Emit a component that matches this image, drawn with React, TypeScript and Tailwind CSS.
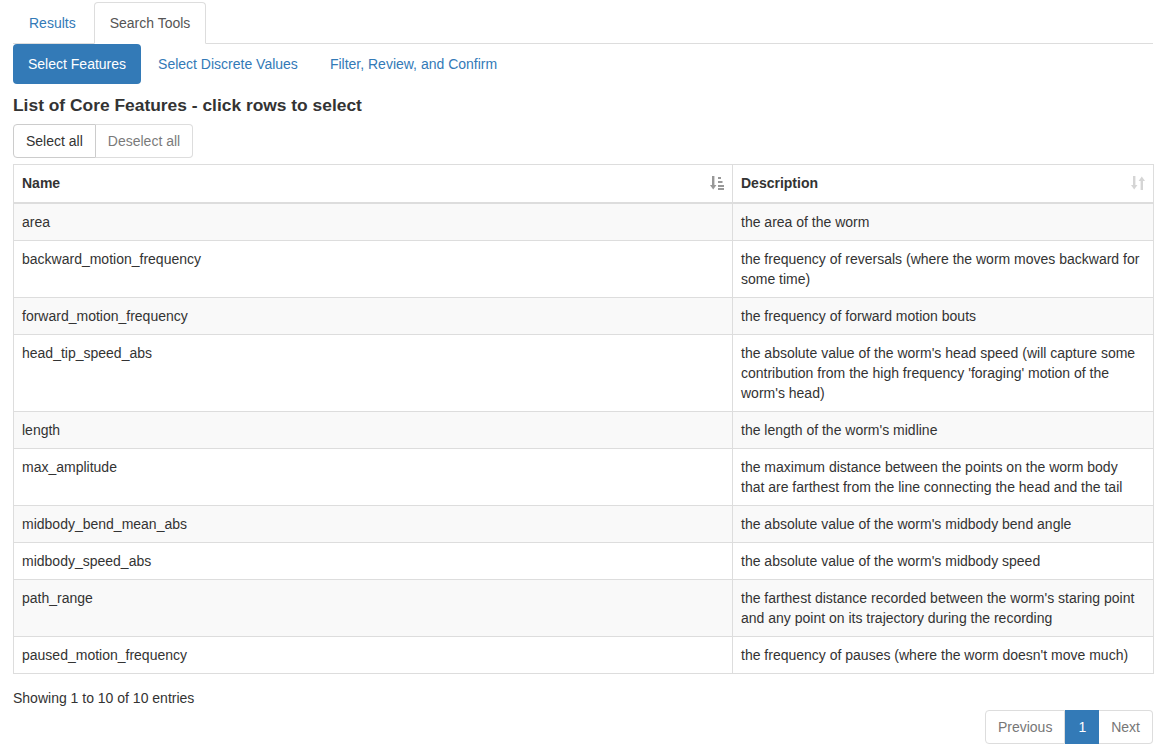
import React from "react";

const rows: [string, string][] = [
  ["area", "the area of the worm"],
  ["backward_motion_frequency", "the frequency of reversals (where the worm moves backward for some time)"],
  ["forward_motion_frequency", "the frequency of forward motion bouts"],
  ["head_tip_speed_abs", "the absolute value of the worm's head speed (will capture some contribution from the high frequency 'foraging' motion of the worm's head)"],
  ["length", "the length of the worm's midline"],
  ["max_amplitude", "the maximum distance between the points on the worm body that are farthest from the line connecting the head and the tail"],
  ["midbody_bend_mean_abs", "the absolute value of the worm's midbody bend angle"],
  ["midbody_speed_abs", "the absolute value of the worm's midbody speed"],
  ["path_range", "the farthest distance recorded between the worm's staring point and any point on its trajectory during the recording"],
  ["paused_motion_frequency", "the frequency of pauses (where the worm doesn't move much)"],
];

function SortAsc() {
  return (
    <svg width="14" height="14" viewBox="0 0 14 14" className="opacity-50">
      <rect x="2" y="0" width="2.4" height="10" fill="#333" />
      <path d="M0 9 L6.4 9 L3.2 13.5 Z" fill="#333" />
      <rect x="8" y="1" width="3" height="2" fill="#333" />
      <rect x="8" y="5" width="4.5" height="2" fill="#333" />
      <rect x="8" y="9" width="6" height="2" fill="#333" />
      <rect x="8" y="12" width="6" height="2" fill="#333" />
    </svg>
  );
}

function SortBoth() {
  return (
    <svg width="14" height="14" viewBox="0 0 14 14" className="opacity-20">
      <rect x="2" y="0" width="2.4" height="10" fill="#333" />
      <path d="M0 9 L6.4 9 L3.2 13.5 Z" fill="#333" />
      <rect x="9.6" y="4" width="2.4" height="10" fill="#333" />
      <path d="M7.6 5 L14 5 L10.8 0.5 Z" fill="#333" />
    </svg>
  );
}

export default function App() {
  return (
    <div
      className="min-h-[753px] bg-white text-[14px] leading-[20px] text-[#333]"
      style={{ fontFamily: '"Liberation Sans", Arial, Helvetica, sans-serif' }}
    >
      <div className="w-[1140px] ml-[13px]">
        {/* Tabs */}
        <div className="flex border-b border-[#ddd] pt-[2px]">
          <div className="px-[15px] py-[10px] text-[#337ab7] border border-transparent mb-[-1px] mr-[2px] rounded-t">
            Results
          </div>
          <div className="px-[15px] py-[10px] text-[#555] bg-white border border-[#ddd] border-b-white mb-[-1px] rounded-t">
            Search Tools
          </div>
        </div>

        {/* Pills */}
        <div className="flex gap-[2px]">
          <div className="px-[15px] py-[10px] bg-[#337ab7] text-white rounded">Select Features</div>
          <div className="px-[15px] py-[10px] text-[#337ab7]">Select Discrete Values</div>
          <div className="px-[15px] py-[10px] text-[#337ab7]">Filter, Review, and Confirm</div>
        </div>

        <h4 className="mt-[12px] mb-[8px] text-[17.4px] leading-[19.8px] font-bold text-[#333]">
          List of Core Features - click rows to select
        </h4>

        <div className="flex">
          <div className="px-[12px] py-[6px] border border-[#ccc] rounded-l text-[#333] bg-white">Select all</div>
          <div className="px-[12px] py-[6px] border border-[#ccc] border-l-0 rounded-r text-[#333] opacity-65 bg-white">
            Deselect all
          </div>
        </div>

        <table className="mt-[6px] w-[1140px] border-collapse border border-[#ddd] table-fixed">
          <colgroup>
            <col className="w-[719px]" />
            <col className="w-[421px]" />
          </colgroup>
          <thead>
            <tr>
              <th className="text-left font-bold pt-[8px] pb-[9px] px-[8px] border border-[#ddd] border-b-2">
                <div className="flex items-center justify-between">
                  <span>Name</span>
                  <SortAsc />
                </div>
              </th>
              <th className="text-left font-bold pt-[8px] pb-[9px] px-[8px] border border-[#ddd] border-b-2">
                <div className="flex items-center justify-between">
                  <span>Description</span>
                  <SortBoth />
                </div>
              </th>
            </tr>
          </thead>
          <tbody>
            {rows.map(([n, d], i) => (
              <tr key={n} className={i % 2 === 0 ? "bg-[#f9f9f9]" : "bg-white"}>
                <td className="align-top p-[8px] border border-[#ddd]">{n}</td>
                <td className="align-top py-[8px] pl-[8px] pr-[12px] border border-[#ddd]">{d}</td>
              </tr>
            ))}
          </tbody>
        </table>

        <div className="pt-[14px]">Showing 1 to 10 of 10 entries</div>

        <div className="flex justify-end mt-[2px]">
          <div className="flex">
            <div className="px-[12px] py-[6px] border border-[#ddd] rounded-l text-[#777] bg-white">Previous</div>
            <div className="px-[12px] py-[6px] border border-[#337ab7] bg-[#337ab7] text-white">1</div>
            <div className="px-[12px] py-[6px] border border-[#ddd] border-l-0 rounded-r text-[#777] bg-white">Next</div>
          </div>
        </div>
      </div>
    </div>
  );
}
